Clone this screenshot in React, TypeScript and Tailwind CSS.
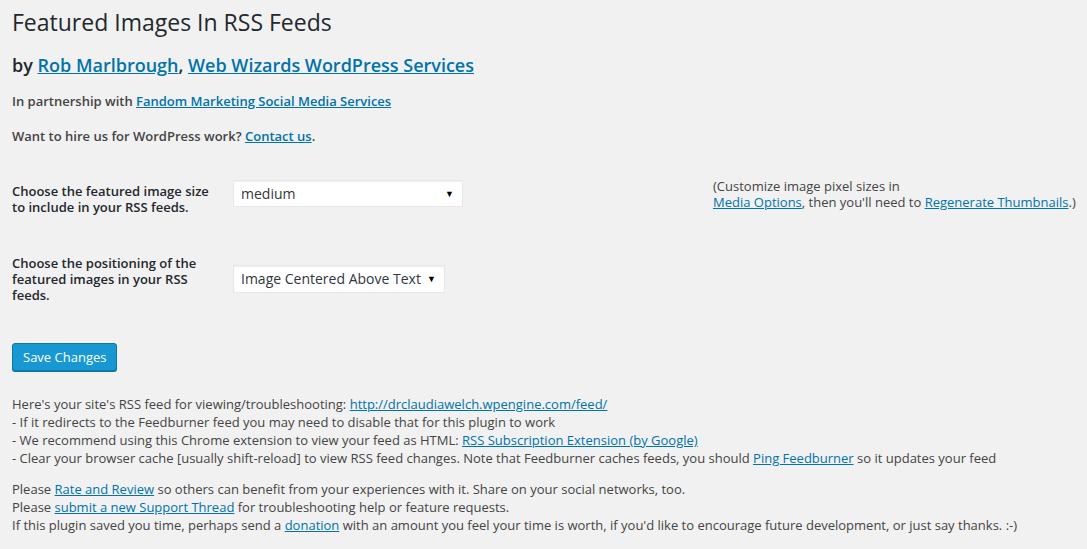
import React from 'react';

const link = 'text-[#0073aa] underline';

function Select({ value, width, height }: { value: string; width: string; height: string }) {
  return (
    <div
      className={`flex items-center justify-between bg-white border border-[#e8e8e8] shadow-[inset_0_1px_2px_rgba(0,0,0,0.07)] pl-[7px] pr-[8px] text-[14px] text-[#32373c] ${width} ${height}`}
    >
      <span>{value}</span>
      <span className="text-[9px] text-black">▼</span>
    </div>
  );
}

export default function App() {
  return (
    <div
      className="min-h-[549px] bg-[#f1f1f1] pl-[12px] text-[13px] leading-[18px] text-[#444]"
      style={{ fontFamily: '"Open Sans", "Noto Sans", sans-serif' }}
    >
      <h2 className="pt-[8px] text-[23px] leading-[29px] font-normal text-[#23282d]">
        Featured Images In RSS Feeds
      </h2>

      <h3 className="mt-[16px] text-[18px] leading-[24px] font-semibold text-[#23282d]">
        by <a className={link}>Rob Marlbrough</a>, <a className={link}>Web Wizards WordPress Services</a>
      </h3>

      <p className="mt-[15px] font-semibold">
        In partnership with <a className={link}>Fandom Marketing Social Media Services</a>
      </p>

      <p className="mt-[17px] font-semibold">
        Want to hire us for WordPress work? <a className={link}>Contact us</a>.
      </p>

      <div className="mt-[35px] flex items-start">
        <div className="w-[221px] pt-[3px] font-semibold leading-[16px] text-[#23282d]">
          Choose the featured image size
          <br />
          to include in your RSS feeds.
        </div>
        <Select value="medium" width="w-[230px]" height="h-[27px]" />
        <div className="ml-[250px] -mt-[2px] leading-[16px]">
          (Customize image pixel sizes in
          <br />
          <a className={link}>Media Options</a>, then you'll need to <a className={link}>Regenerate Thumbnails</a>.)
        </div>
      </div>

      <div className="mt-[40px] flex items-center">
        <div className="w-[221px] font-semibold leading-[16px] text-[#23282d]">
          Choose the positioning of the
          <br />
          featured images in your RSS
          <br />
          feeds.
        </div>
        <Select value="Image Centered Above Text" width="w-[212px]" height="h-[28px]" />
      </div>

      <button className="mt-[40px] h-[28px] rounded-[3px] border border-[#0a78ad] bg-[#1898d3] px-[10px] text-[13px] leading-[26px] text-white shadow-[0_1px_0_#0a78ad]">
        Save Changes
      </button>

      <div className="mt-[24px]">
        <div>
          Here's your site's RSS feed for viewing/troubleshooting:{' '}
          <a className={link}>http://drclaudiawelch.wpengine.com/feed/</a>
        </div>
        <div>- If it redirects to the Feedburner feed you may need to disable that for this plugin to work</div>
        <div>
          - We recommend using this Chrome extension to view your feed as HTML:{' '}
          <a className={link}>RSS Subscription Extension (by Google)</a>
        </div>
        <div>
          - Clear your browser cache [usually shift-reload] to view RSS feed changes. Note that Feedburner caches
          feeds, you should <a className={link}>Ping Feedburner</a> so it updates your feed
        </div>
      </div>

      <div className="mt-[13px]">
        <div>
          Please <a className={link}>Rate and Review</a> so others can benefit from your experiences with it. Share
          on your social networks, too.
        </div>
        <div>
          Please <a className={link}>submit a new Support Thread</a> for troubleshooting help or feature requests.
        </div>
        <div>
          If this plugin saved you time, perhaps send a <a className={link}>donation</a> with an amount you feel
          your time is worth, if you'd like to encourage future development, or just say thanks. :-)
        </div>
      </div>
    </div>
  );
}
